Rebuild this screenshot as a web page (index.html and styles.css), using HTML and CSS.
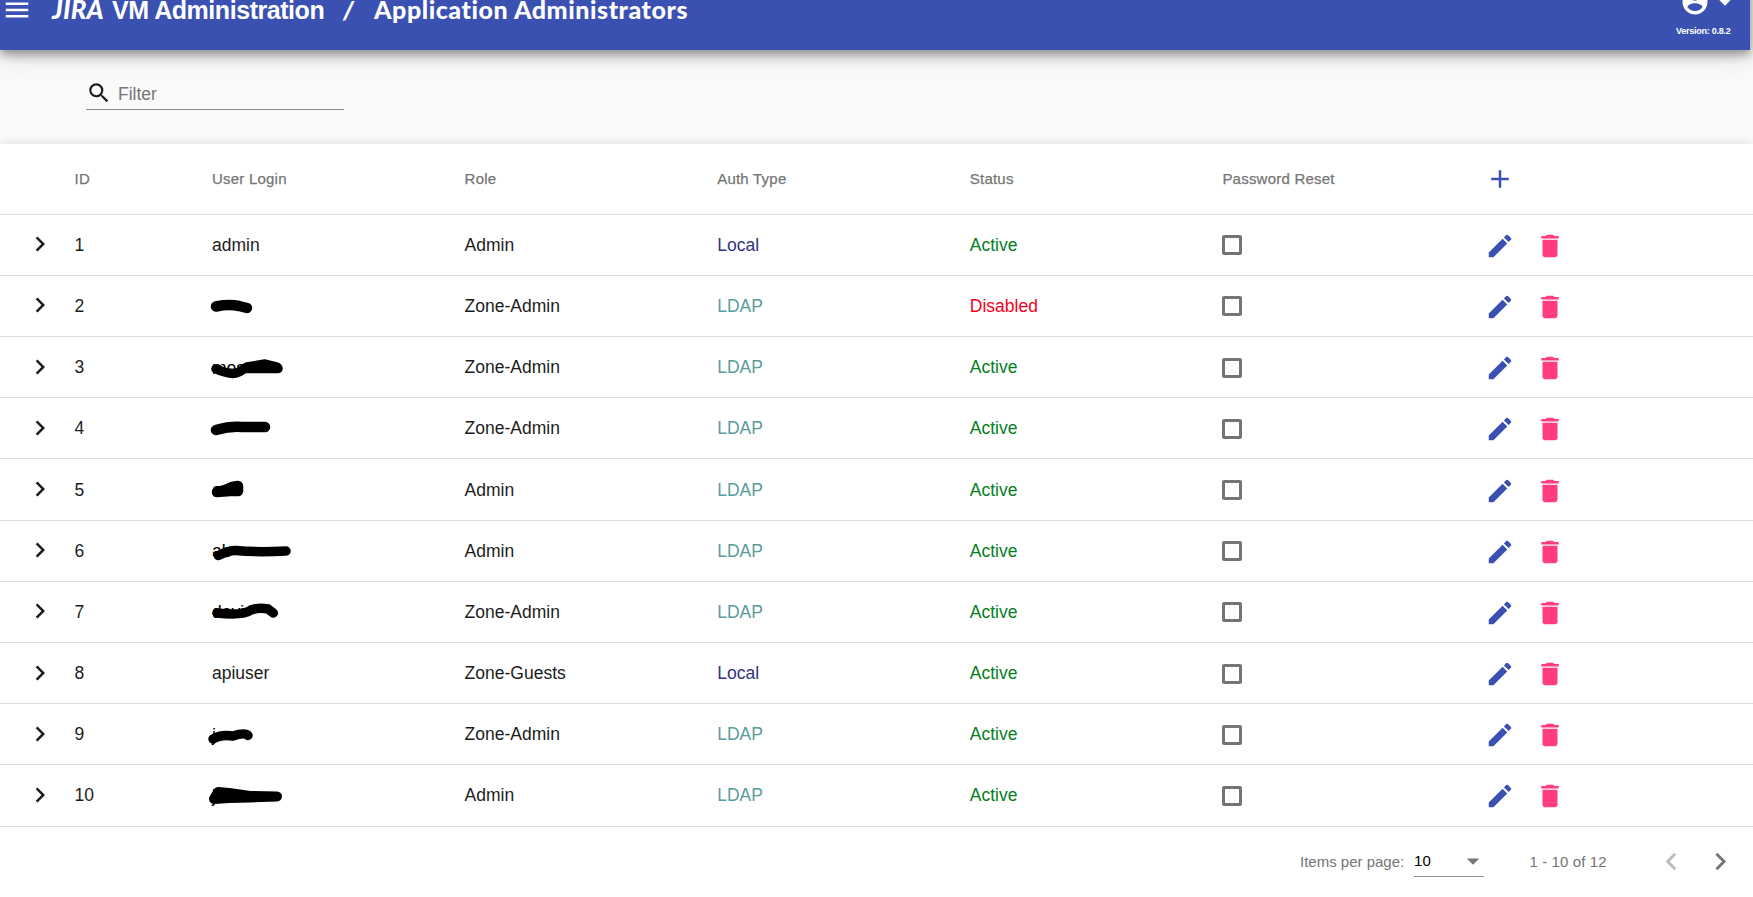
FILE: index.html
```
<!DOCTYPE html>
<html lang="en">
<head>
<meta charset="utf-8">
<title>Application Administrators</title>
<link rel="stylesheet" href="styles.css">
</head>
<body>
<svg class="defs">
  <symbol id="menu" viewBox="0 0 24 24"><path d="M3 18h18v-2H3v2zm0-5h18v-2H3v2zm0-7v2h18V6H3z"/></symbol>
  <symbol id="account" viewBox="0 0 24 24"><path d="M12 2C6.48 2 2 6.48 2 12s4.48 10 10 10 10-4.48 10-10S17.520 2 12 2zm0 3c1.660 0 3 1.340 3 3s-1.340 3-3 3-3-1.340-3-3 1.340-3 3-3zm0 14.200c-2.500 0-4.710-1.280-6-3.220.03-1.990 4-3.080 6-3.080 1.990 0 5.970 1.090 6 3.080-1.290 1.940-3.500 3.220-6 3.220z"/></symbol>
  <symbol id="drop" viewBox="0 0 24 24"><path d="M7 10l5 5 5-5z"/></symbol>
  <symbol id="search" viewBox="0 0 24 24"><path d="M15.5 14h-.79l-.28-.27A6.471 6.471 0 0 0 16 9.500 6.500 6.500 0 1 0 9.500 16c1.610 0 3.090-.59 4.230-1.570l.27.280v.790l5 4.990L20.490 19l-4.990-5zm-6 0C7.010 14 5 11.990 5 9.500S7.010 5 9.500 5 14 7.010 14 9.500 11.990 14 9.500 14z"/></symbol>
  <symbol id="right" viewBox="0 0 24 24"><path d="M10 6L8.590 7.410 13.170 12l-4.580 4.590L10 18l6-6z"/></symbol>
  <symbol id="left" viewBox="0 0 24 24"><path d="M15.410 7.410L14 6l-6 6 6 6 1.410-1.410L10.830 12z"/></symbol>
  <symbol id="plus" viewBox="0 0 24 24"><path d="M19 13h-6v6h-2v-6H5v-2h6V5h2v6h6v2z"/></symbol>
  <symbol id="edit" viewBox="0 0 24 24"><path d="M3 17.250V21h3.750L17.810 9.940l-3.750-3.750L3 17.250zM20.710 7.040a.996.996 0 0 0 0-1.410l-2.340-2.340a.996.996 0 0 0-1.410 0l-1.830 1.830 3.750 3.750 1.830-1.830z"/></symbol>
  <symbol id="trash" viewBox="0 0 24 24"><path d="M6 19c0 1.100.9 2 2 2h8c1.100 0 2-.9 2-2V7H6v12zM19 4h-3.500l-1-1h-5l-1 1H5v2h14V4z"/></symbol>
</svg>
<header class="toolbar">
  <svg class="icon"><use href="#menu"/></svg>
  <h1 class="title"><span class="brand">JIRA</span><span class="product">VM Administration</span><span class="slash">/</span><span class="page">Application Administrators</span></h1>
  <div class="account">
    <div class="account-icons"><svg class="icon"><use href="#account"/></svg><svg class="icon"><use href="#drop"/></svg></div>
    <div class="version">Version: 0.8.2</div>
  </div>
</header>
<div class="filter-bar">
  <label class="filter"><svg class="search-icon"><use href="#search"/></svg><span>Filter</span></label>
</div>
<main class="panel">
  <div class="row head">
    <span></span><span>ID</span><span>User Login</span><span>Role</span><span>Auth Type</span><span>Status</span><span>Password Reset</span>
    <span class="actions"><svg class="icon edit"><use href="#plus"/></svg></span>
  </div>
  <div id="rows"></div>
  <footer class="paginator">
    <span class="per-page">Items per page:</span>
    <span class="select">10<svg class="icon"><use href="#drop"/></svg></span>
    <span class="range">1 - 10 of 12</span>
    <svg class="nav prev"><use href="#left"/></svg>
    <svg class="nav next"><use href="#right"/></svg>
  </footer>
</main>
<script src="app.js"></script>
</body>
</html>
```
FILE: styles.css
```
body { margin: 0; height: 897px; overflow: hidden; background: #fafafa; font-family: "Liberation Sans", Arial, sans-serif; color: #1c1c1c; }
.defs { display: none; }
.icon { width: 30px; height: 30px; fill: currentColor; flex: none; display: block; }
.toolbar { position: relative; box-sizing: border-box; width: 1750px; height: 80px; margin-top: -30px; padding-left: 2px; display: flex; align-items: center; background: #3b51b1; color: #fff; box-shadow: 0 4px 10px rgba(0,0,0,.4), 0 7px 24px rgba(0,0,0,.14); }
.title { margin: 0 0 2px 20px; display: flex; align-items: baseline; font-size: 25px; line-height: 28px; white-space: nowrap; }
.brand { width: 60px; font-family: Lato, sans-serif; font-weight: 900; font-style: italic; font-size: 26px; letter-spacing: .2px; }
.product { width: 231px; letter-spacing: -.45px; }
.slash { width: 31px; font-family: Lato, sans-serif; font-weight: 900; font-style: italic; }
.page { font-family: Lato, sans-serif; font-weight: 900; letter-spacing: .55px; }
.account { margin-left: auto; width: 75px; height: 80px; }
.account-icons { display: flex; padding: 17px 0 0 5px; }
.version { font-size: 9px; font-weight: bold; line-height: 12px; margin-top: 8px; padding-left: 1px; white-space: nowrap; letter-spacing: -.25px; }
.filter-bar { height: 94px; padding-left: 86px; }
.filter { display: flex; align-items: center; box-sizing: border-box; width: 258px; height: 60px; padding-top: 26px; border-bottom: 1px solid #8f8f8f; font-size: 17.5px; color: #757575; }
.filter span { padding-top: 3px; }
.search-icon { width: 26px; height: 26px; fill: #1c1c1c; margin: 0 6px 0 0; }
.panel { height: 753px; background: #fff; box-shadow: 0 2px 12px rgba(0,0,0,.17); }
.row { display: grid; grid-template-columns: 74.5px 137.5px 252.6px 252.6px 252.6px 252.6px 263px 1fr; align-items: center; box-sizing: border-box; height: 61.2px; padding-top: 1px; border-bottom: 1px solid #dedede; font-size: 17.5px; }
.head { height: 70.7px; padding-top: 0; font-size: 15px; color: #757575; letter-spacing: .22px; -webkit-text-stroke: .25px #757575; }
.actions { display: flex; gap: 20px; padding-top: 1px; }
.expand { margin: 0 0 2px 24.5px; }
.box { width: 14px; height: 14px; border: 3px solid #757575; border-radius: 2px; }
.edit { color: #3b51b1; }
.delete { color: #ff3d80; }
.ldap { color: #5a9c9a; }
.local { color: #33337f; }
.active { color: #058022; }
.disabled { color: #f5001d; }
.scribble { display: block; width: 95px; height: 30px; margin-left: -7.5px; font-size: 17.5px; }
.scribble path { stroke: #000; stroke-linecap: round; stroke-linejoin: round; }
.paginator { display: flex; align-items: center; height: 69px; padding-left: 1300px; font-size: 15px; color: #757575; }
.per-page { width: 115px; }
.select { display: flex; align-items: center; justify-content: space-between; box-sizing: border-box; width: 70px; height: 31px; border-bottom: 1px solid #8f8f8f; color: #000; }
.select .icon { color: #757575; margin-right: -4px; }
.range { margin-left: 46px; width: 125px; letter-spacing: .1px; }
.nav { width: 35px; height: 35px; fill: #757575; margin-right: 15px; }
.prev { fill: #bcbcbc; }
```
FILE: app.js
```
// Marker strokes over hidden logins: [visible letters, stroke width, path, fill]
const marks = {
  2: ['', 10.5, 'M11 15.500Q24 13 34 15L42 17', 'none'],
  3: ['mos', 9.5, 'M11 16Q27 23 34 19L42 14L60 11L72 14L73 15.500L42 15.500', '#000'],
  4: ['', 10.5, 'M11 16Q25 12 37 13L60 13', 'none'],
  5: ['a', 10.5, 'M12 17L25 16L33 16L33 11L27 12L20 15Z', '#000'],
  6: ['ab', 9.5, 'M13.300 19.500Q25 14 31 14.500Q51 16.500 81 15', 'none'],
  7: ['davi', 9.5, 'M12 16Q38 19 46 13Q54 10 63 12L68.300 16', 'none'],
  9: ['j', 9.5, 'M8 19Q16 14 28 16Q40 12 43 15.500', 'none'],
  10: ['j', 10, 'M9 18L13 11L24 12L45 15L72 15.500L45 16.500L24 17Z', '#000']
};
const users = [
  [1, 'admin', 'Admin', 'Local'], [2, '', 'Zone-Admin', 'LDAP'], [3, '', 'Zone-Admin', 'LDAP'],
  [4, '', 'Zone-Admin', 'LDAP'], [5, '', 'Admin', 'LDAP'], [6, '', 'Admin', 'LDAP'],
  [7, '', 'Zone-Admin', 'LDAP'], [8, 'apiuser', 'Zone-Guests', 'Local'],
  [9, '', 'Zone-Admin', 'LDAP'], [10, '', 'Admin', 'LDAP']
];
const mark = ([text, width, d, fill]) =>
  `<svg class="scribble" viewBox="0 0 95 30"><text x="7" y="21">${text}</text><path d="${d}" stroke-width="${width}" fill="${fill}"/></svg>`;
document.getElementById('rows').innerHTML = users.map(([id, login, role, auth]) => {
  const status = id === 2 ? 'Disabled' : 'Active';
  return `<div class="row"><svg class="icon expand"><use href="#right"/></svg><span>${id}</span>
  <span>${login || mark(marks[id])}</span><span>${role}</span>
  <span class="${auth.toLowerCase()}">${auth}</span><span class="${status.toLowerCase()}">${status}</span>
  <span class="box"></span><span class="actions"><svg class="icon edit"><use href="#edit"/></svg><svg class="icon delete"><use href="#trash"/></svg></span></div>`;
}).join('');
```
